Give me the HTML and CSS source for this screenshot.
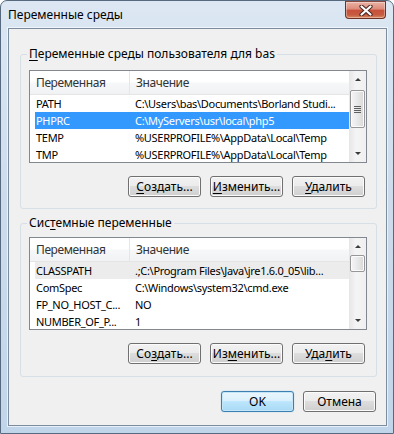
FILE: index.html
```html
<!DOCTYPE html>
<html lang="ru">
<head>
  <meta charset="UTF-8" />
  <title>Переменные среды</title>
  <link rel="stylesheet" href="styles.css">
</head>
<body>

  <div class="window">
    <!-- Title bar -->
    <div class="titlebar">
      <span class="title">Переменные среды</span>
      <button class="close" title="Закрыть">
        <svg width="14" height="11" viewBox="0 0 14 11">
          <path d="M2.5 1.5 L11.5 9.5 M11.5 1.5 L2.5 9.5" stroke="#4a2520" stroke-width="4.2" stroke-linecap="round"/>
          <path d="M2.5 1.5 L11.5 9.5 M11.5 1.5 L2.5 9.5" stroke="#fff" stroke-width="2.2" stroke-linecap="round"/>
        </svg>
      </button>
    </div>

    <div class="client">

      <!-- User variables -->
      <fieldset class="group">
        <legend><u>П</u>еременные среды пользователя для bas</legend>
        <div class="list">
          <div class="list-body">
            <div class="list-head"><span>Переменная</span><span>Значение</span></div>
            <div class="row"><span>PATH</span><span>C:\Users\bas\Documents\Borland Studi...</span></div>
            <div class="row selected"><span>PHPRC</span><span>C:\MyServers\usr\local\php5</span></div>
            <div class="row"><span>TEMP</span><span>%USERPROFILE%\AppData\Local\Temp</span></div>
            <div class="row"><span>TMP</span><span>%USERPROFILE%\AppData\Local\Temp</span></div>
          </div>
          <div class="scrollbar">
            <div class="sb-btn up"></div>
            <div class="sb-track"><div class="sb-thumb thumb-user"></div></div>
            <div class="sb-btn down"></div>
          </div>
        </div>
        <div class="buttons">
          <button class="btn"><u>С</u>оздать...</button>
          <button class="btn"><u>И</u>зменить...</button>
          <button class="btn"><u>У</u>далить</button>
        </div>
      </fieldset>

      <!-- System variables -->
      <fieldset class="group group-system">
        <legend>Сис<u>т</u>емные переменные</legend>
        <div class="list">
          <div class="list-body">
            <div class="list-head"><span>Переменная</span><span>Значение</span></div>
            <div class="row inactive"><span>CLASSPATH</span><span>.;C:\Program Files\Java\jre1.6.0_05\lib...</span></div>
            <div class="row"><span>ComSpec</span><span>C:\Windows\system32\cmd.exe</span></div>
            <div class="row"><span>FP_NO_HOST_C...</span><span>NO</span></div>
            <div class="row"><span>NUMBER_OF_P...</span><span>1</span></div>
          </div>
          <div class="scrollbar">
            <div class="sb-btn up"></div>
            <div class="sb-track"><div class="sb-thumb thumb-system"></div></div>
            <div class="sb-btn down"></div>
          </div>
        </div>
        <div class="buttons">
          <button class="btn">Со<u>з</u>дать...</button>
          <button class="btn">Из<u>м</u>енить...</button>
          <button class="btn">Уда<u>л</u>ить</button>
        </div>
      </fieldset>

      <!-- Dialog buttons -->
      <div class="dialog-buttons">
        <button class="btn default">OK</button>
        <button class="btn">Отмена</button>
      </div>

    </div>
  </div>

</body>
</html>
```

FILE: styles.css
```css
* { margin: 0; padding: 0; box-sizing: border-box; }
body { font-family: "Noto Sans", "Open Sans", sans-serif; font-size: 12px; color: #000; background: #fff; }
u { text-decoration: underline; text-underline-offset: 2px; }

/* Window frame */
.window { width: 394px; height: 434px; display: flex; flex-direction: column; padding: 0 6px 7px 7px; border: 1px solid #56697f; border-radius: 7px 7px 0 0; background: linear-gradient(#dce7f3, #cddcec 45%, #c1d5ea); }
.titlebar { height: 27px; display: flex; justify-content: space-between; align-items: flex-start; }
.title { padding-top: 6px; line-height: 16px; color: #000; }
.close { width: 41px; height: 18px; margin-right: 1px; display: flex; align-items: center; justify-content: center; border: 1px solid #6e2f25; border-top-color: #8a4a40; border-radius: 0 0 4px 4px; background: linear-gradient(#eab3a6, #dd8a79 45%, #c8503a 50%, #c65a41 80%, #d98a62); box-shadow: inset 0 0 0 1px rgba(255,255,255,0.35); }

/* Client area */
.client { flex: 1; display: flex; flex-direction: column; padding: 17px 9px 0 11px; background: #f0f0f0; border: 1px solid #7d8da0; box-shadow: 0 0 0 1px rgba(255,255,255,0.6); }

.group { border: 1px solid #d5dfe5; border-radius: 3px; padding: 8px 9px 11px 8px; }
.group legend { padding: 0 2px; margin-left: -2px; line-height: 16px; }
.group-system { margin-top: 6px; padding-top: 6px; padding-bottom: 12px; }

/* List view */
.list { height: 93px; display: flex; border: 1px solid #828790; background: #fff; }
.list-body { flex: 1; overflow: hidden; }
.list-head { height: 24px; display: grid; grid-template-columns: 100px 1fr; border-bottom: 1px solid #e5e5e5; background: linear-gradient(#fff 45%, #f6f7f8 55%, #f1f2f4); color: #333; letter-spacing: -0.4px; }
.list-head span { padding-left: 6px; line-height: 23px; }
.list-head span:first-child { border-right: 1px solid #e3e6ea; }
.row { height: 17px; margin-left: 5px; display: grid; grid-template-columns: 95px 1fr; font-size: 11px; letter-spacing: -0.3px; line-height: 17px; }
.row span { white-space: nowrap; overflow: hidden; }
.row span:first-child { padding-left: 1px; }
.row span:last-child { padding-left: 5px; }
.row.selected { background: #3399ff; color: #fff; }
.row.inactive { background: #ececec; }

/* Scrollbar */
.scrollbar { width: 17px; display: flex; flex-direction: column; background: linear-gradient(to right, #e6e6e6, #f4f4f4 40%, #f0f0f0); }
.sb-btn { height: 17px; display: flex; align-items: center; justify-content: center; }
.sb-btn::before { content: ""; border-left: 3px solid transparent; border-right: 3px solid transparent; }
.sb-btn.up::before { border-bottom: 3px solid #3a3a3a; }
.sb-btn.down::before { border-top: 3px solid #3a3a3a; }
.sb-track { flex: 1; }
.sb-thumb { margin: 0 1px; display: flex; align-items: center; justify-content: center; border: 1px solid #979797; border-radius: 2px; background: linear-gradient(to right, #f6f6f6, #e8e8e8 50%, #d8d8d8); box-shadow: inset 0 0 0 1px #fbfbfb; }
.thumb-user { margin-top: 2px; height: 38px; }
.thumb-user::after { content: ""; width: 7px; height: 7px; background: repeating-linear-gradient(#5f5f5f 0 1px, transparent 1px 2px); }
.thumb-system { height: 17px; }

/* Buttons */
.buttons { display: flex; justify-content: flex-end; gap: 9px; margin-top: 13px; margin-right: 2px; }
.btn { width: 73px; height: 21px; font: inherit; color: #000; border: 1px solid #707070; border-radius: 3px; background: linear-gradient(#f2f2f2, #ebebeb 50%, #dddddd 50%, #cfcfcf); box-shadow: inset 0 0 0 1px #fbfbfb; }
.btn.default { border-color: #3c7fb1; background: linear-gradient(#eaf6fd, #d9f0fc 50%, #bee6fd 50%, #a7d9f5); box-shadow: inset 0 0 0 1px #c4e5f6, 0 0 1px #6fb8e8; }
.dialog-buttons { display: flex; justify-content: flex-end; gap: 9px; margin-top: 14px; margin-right: 1px; }
```
